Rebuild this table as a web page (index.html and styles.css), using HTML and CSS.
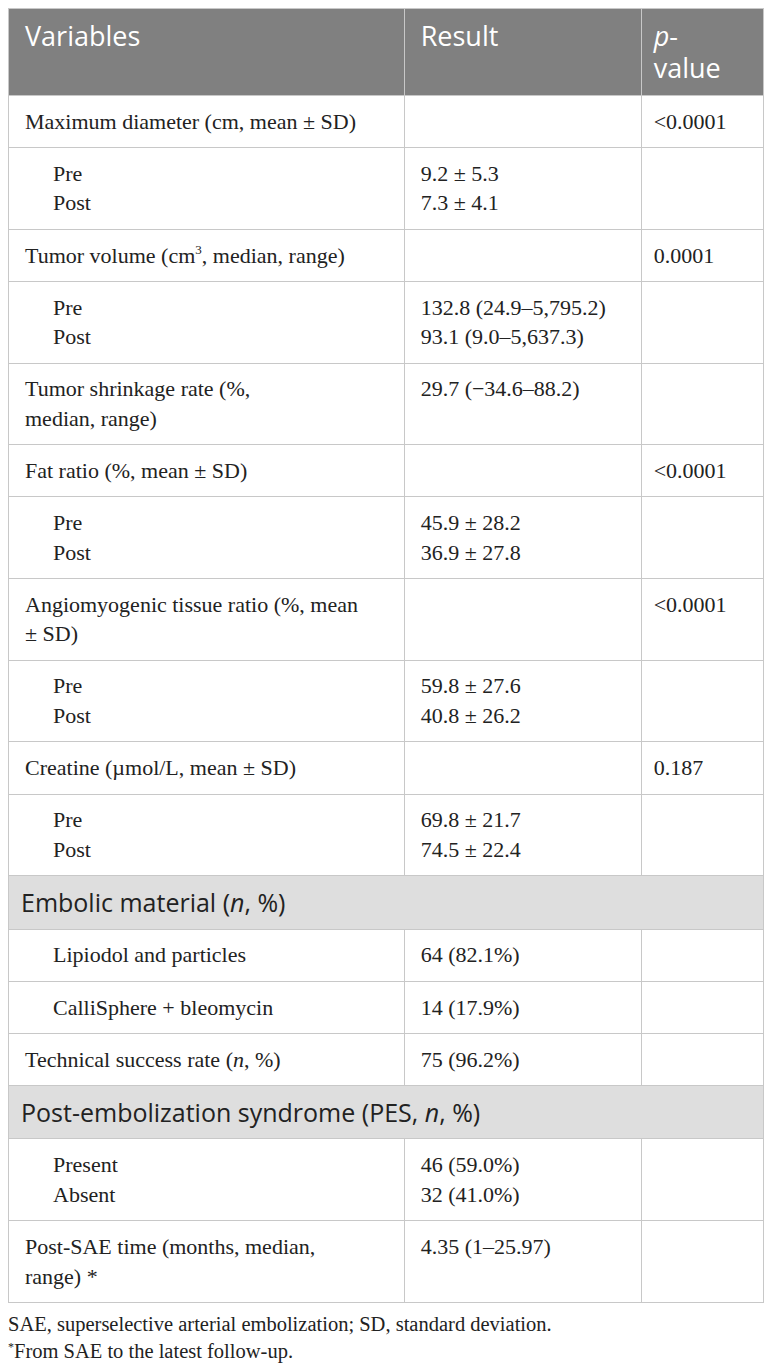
FILE: index.html
```html
<!DOCTYPE html>
<html lang="en">

<head>
    <meta charset="UTF-8">
    <meta name="viewport" content="width=device-width, initial-scale=1.0">
    <title>Table</title>
    <link rel="stylesheet" href="styles.css">
</head>

<body>
    <table class="results">
        <colgroup>
            <col class="col-var">
            <col class="col-res">
            <col class="col-p">
        </colgroup>
        <thead>
            <tr>
                <th>Variables</th>
                <th>Result</th>
                <th><i>p</i>-<br>value</th>
            </tr>
        </thead>
        <tbody>
            <tr>
                <td>Maximum diameter (cm, mean ± SD)</td>
                <td></td>
                <td>&lt;0.0001</td>
            </tr>
            <tr>
                <td class="sub">Pre<br>Post</td>
                <td>9.2 ± 5.3<br>7.3 ± 4.1</td>
                <td></td>
            </tr>
            <tr>
                <td>Tumor volume (cm<sup>3</sup>, median, range)</td>
                <td></td>
                <td>0.0001</td>
            </tr>
            <tr>
                <td class="sub">Pre<br>Post</td>
                <td>132.8 (24.9–5,795.2)<br>93.1 (9.0–5,637.3)</td>
                <td></td>
            </tr>
            <tr>
                <td>Tumor shrinkage rate (%,<br>median, range)</td>
                <td>29.7 (−34.6–88.2)</td>
                <td></td>
            </tr>
            <tr>
                <td>Fat ratio (%, mean ± SD)</td>
                <td></td>
                <td>&lt;0.0001</td>
            </tr>
            <tr>
                <td class="sub">Pre<br>Post</td>
                <td>45.9 ± 28.2<br>36.9 ± 27.8</td>
                <td></td>
            </tr>
            <tr>
                <td>Angiomyogenic tissue ratio (%, mean<br>± SD)</td>
                <td></td>
                <td>&lt;0.0001</td>
            </tr>
            <tr>
                <td class="sub">Pre<br>Post</td>
                <td>59.8 ± 27.6<br>40.8 ± 26.2</td>
                <td></td>
            </tr>
            <tr>
                <td>Creatine (µmol/L, mean ± SD)</td>
                <td></td>
                <td>0.187</td>
            </tr>
            <tr>
                <td class="sub">Pre<br>Post</td>
                <td>69.8 ± 21.7<br>74.5 ± 22.4</td>
                <td></td>
            </tr>
            <tr class="section">
                <td colspan="3">Embolic material (<i>n</i>, %)</td>
            </tr>
            <tr>
                <td class="sub">Lipiodol and particles</td>
                <td>64 (82.1%)</td>
                <td></td>
            </tr>
            <tr>
                <td class="sub">CalliSphere + bleomycin</td>
                <td>14 (17.9%)</td>
                <td></td>
            </tr>
            <tr>
                <td>Technical success rate (<i>n</i>, %)</td>
                <td>75 (96.2%)</td>
                <td></td>
            </tr>
            <tr class="section">
                <td colspan="3">Post-embolization syndrome (PES, <i>n</i>, %)</td>
            </tr>
            <tr>
                <td class="sub">Present<br>Absent</td>
                <td>46 (59.0%)<br>32 (41.0%)</td>
                <td></td>
            </tr>
            <tr>
                <td>Post-SAE time (months, median,<br>range) *</td>
                <td>4.35 (1–25.97)</td>
                <td></td>
            </tr>
        </tbody>
    </table>

    <div class="notes">
        <p>SAE, superselective arterial embolization; SD, standard deviation.</p>
        <p><sup>*</sup>From SAE to the latest follow-up.</p>
    </div>
</body>

</html>
```

FILE: styles.css
```css
*,
*::before,
*::after {
    box-sizing: border-box;
}

body {
    margin: 8px;
    background: white;
    color: #222;
    font-family: "Liberation Serif", "Times New Roman", serif;
}

/* table */
.results {
    width: 100%;
    border-collapse: collapse;
    table-layout: fixed;
    font-size: 22px;
    line-height: 29.6px;
}

.col-var {
    width: 52.4%;
}

.col-res {
    width: 31.4%;
}

.col-p {
    width: 16.2%;
}

.results th,
.results td {
    border: 1px solid #c8c8c8;
    text-align: left;
    vertical-align: top;
}

/* header */
.results th {
    background: #808080;
    color: white;
    font-family: "Open Sans", Lato, sans-serif;
    font-weight: normal;
    font-size: 27px;
    line-height: 32px;
    padding: 11px 14px 11px 16px;
}

.results th:last-child {
    padding-left: 12px;
}

/* body cells */
.results td {
    padding: 10.75px 14px 10.75px 16px;
}

.results td:last-child {
    padding-left: 12px;
}

.results td.sub {
    padding-left: 44px;
}

.results sup {
    font-size: 13px;
    line-height: 0;
    vertical-align: 9px;
}

/* section rows */
.section td {
    background: #dedede;
    font-family: "Open Sans", Lato, sans-serif;
    font-size: 25px;
    line-height: 31px;
}

/* footnotes */
.notes {
    margin-top: 8px;
    font-size: 20.5px;
    line-height: 27px;
}

.notes p {
    margin: 0;
}

.notes sup {
    font-size: 12px;
    line-height: 0;
    vertical-align: 7px;
}
```
